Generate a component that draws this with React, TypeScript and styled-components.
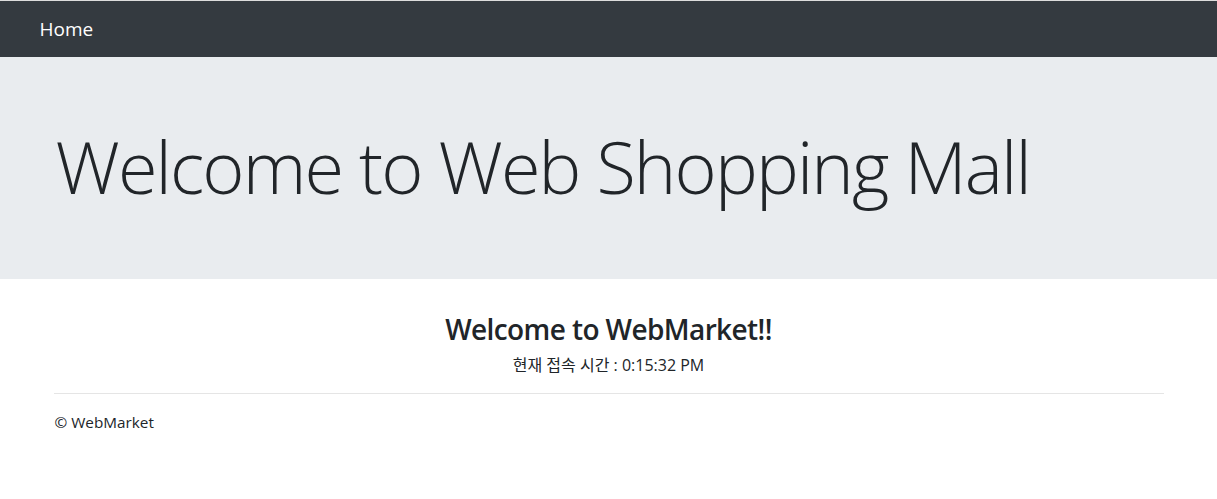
import styled, { createGlobalStyle } from "styled-components";

const GlobalStyle = createGlobalStyle`
  body {
    margin: 0;
    font-family: "Open Sans", "Noto Sans CJK KR", sans-serif;
    font-size: 16px;
    line-height: 1.5;
    color: #212529;
    background: #fff;
  }
`;

const Navbar = styled.nav`
  background: #343a40;
  border-top: 1px solid #dcdcdc;
  padding: 8px 16px;
`;

const Container = styled.div`
  max-width: 1140px;
  margin: 0 auto;
  padding: 0 15px;
  box-sizing: border-box;
`;

const NavContainer = styled(Container)`
  padding: 0;
  display: flex;
  align-items: center;
`;

const Brand = styled.a`
  display: inline-block;
  padding: 5px 0;
  font-size: 19px;
  line-height: 30px;
  color: #fff;
  text-decoration: none;
  margin-left: 1px;
`;

const Jumbotron = styled.div`
  background: #e9ecef;
  padding: 66px 0 62px;
  margin-bottom: 34px;
`;

const Display = styled.h1`
  margin: 0 0 8px;
  font-size: 72px;
  font-weight: 300;
  line-height: 1.2;
  letter-spacing: -1.85px;
  color: #212529;
  padding-left: 2px;
`;

const Center = styled.div`
  text-align: center;
`;

const Heading = styled.h3`
  margin: 0 0 6px;
  font-size: 28px;
  font-weight: 600;
  line-height: 1.2;
  letter-spacing: -0.6px;
`;

const Clock = styled.p`
  margin: 0 0 16px;
  font-size: 16px;
`;

const Rule = styled.hr`
  margin: 16px 0 17px;
  border: 0;
  border-top: 1px solid rgba(0, 0, 0, 0.1);
`;

const Footer = styled.footer`
  p {
    margin: 0;
    font-size: 15.3px;
    padding-left: 1px;
  }
`;

export default function App() {
  return (
    <>
      <GlobalStyle />
      <Navbar>
        <NavContainer>
          <Brand href="#">Home</Brand>
        </NavContainer>
      </Navbar>
      <Jumbotron>
        <Container>
          <Display>Welcome to Web Shopping Mall</Display>
        </Container>
      </Jumbotron>
      <Container>
        <Center>
          <Heading>Welcome to WebMarket!!</Heading>
          <Clock>현재 접속 시간 : 0:15:32 PM</Clock>
        </Center>
        <Rule />
        <Footer>
          <p>© WebMarket</p>
        </Footer>
      </Container>
    </>
  );
}
